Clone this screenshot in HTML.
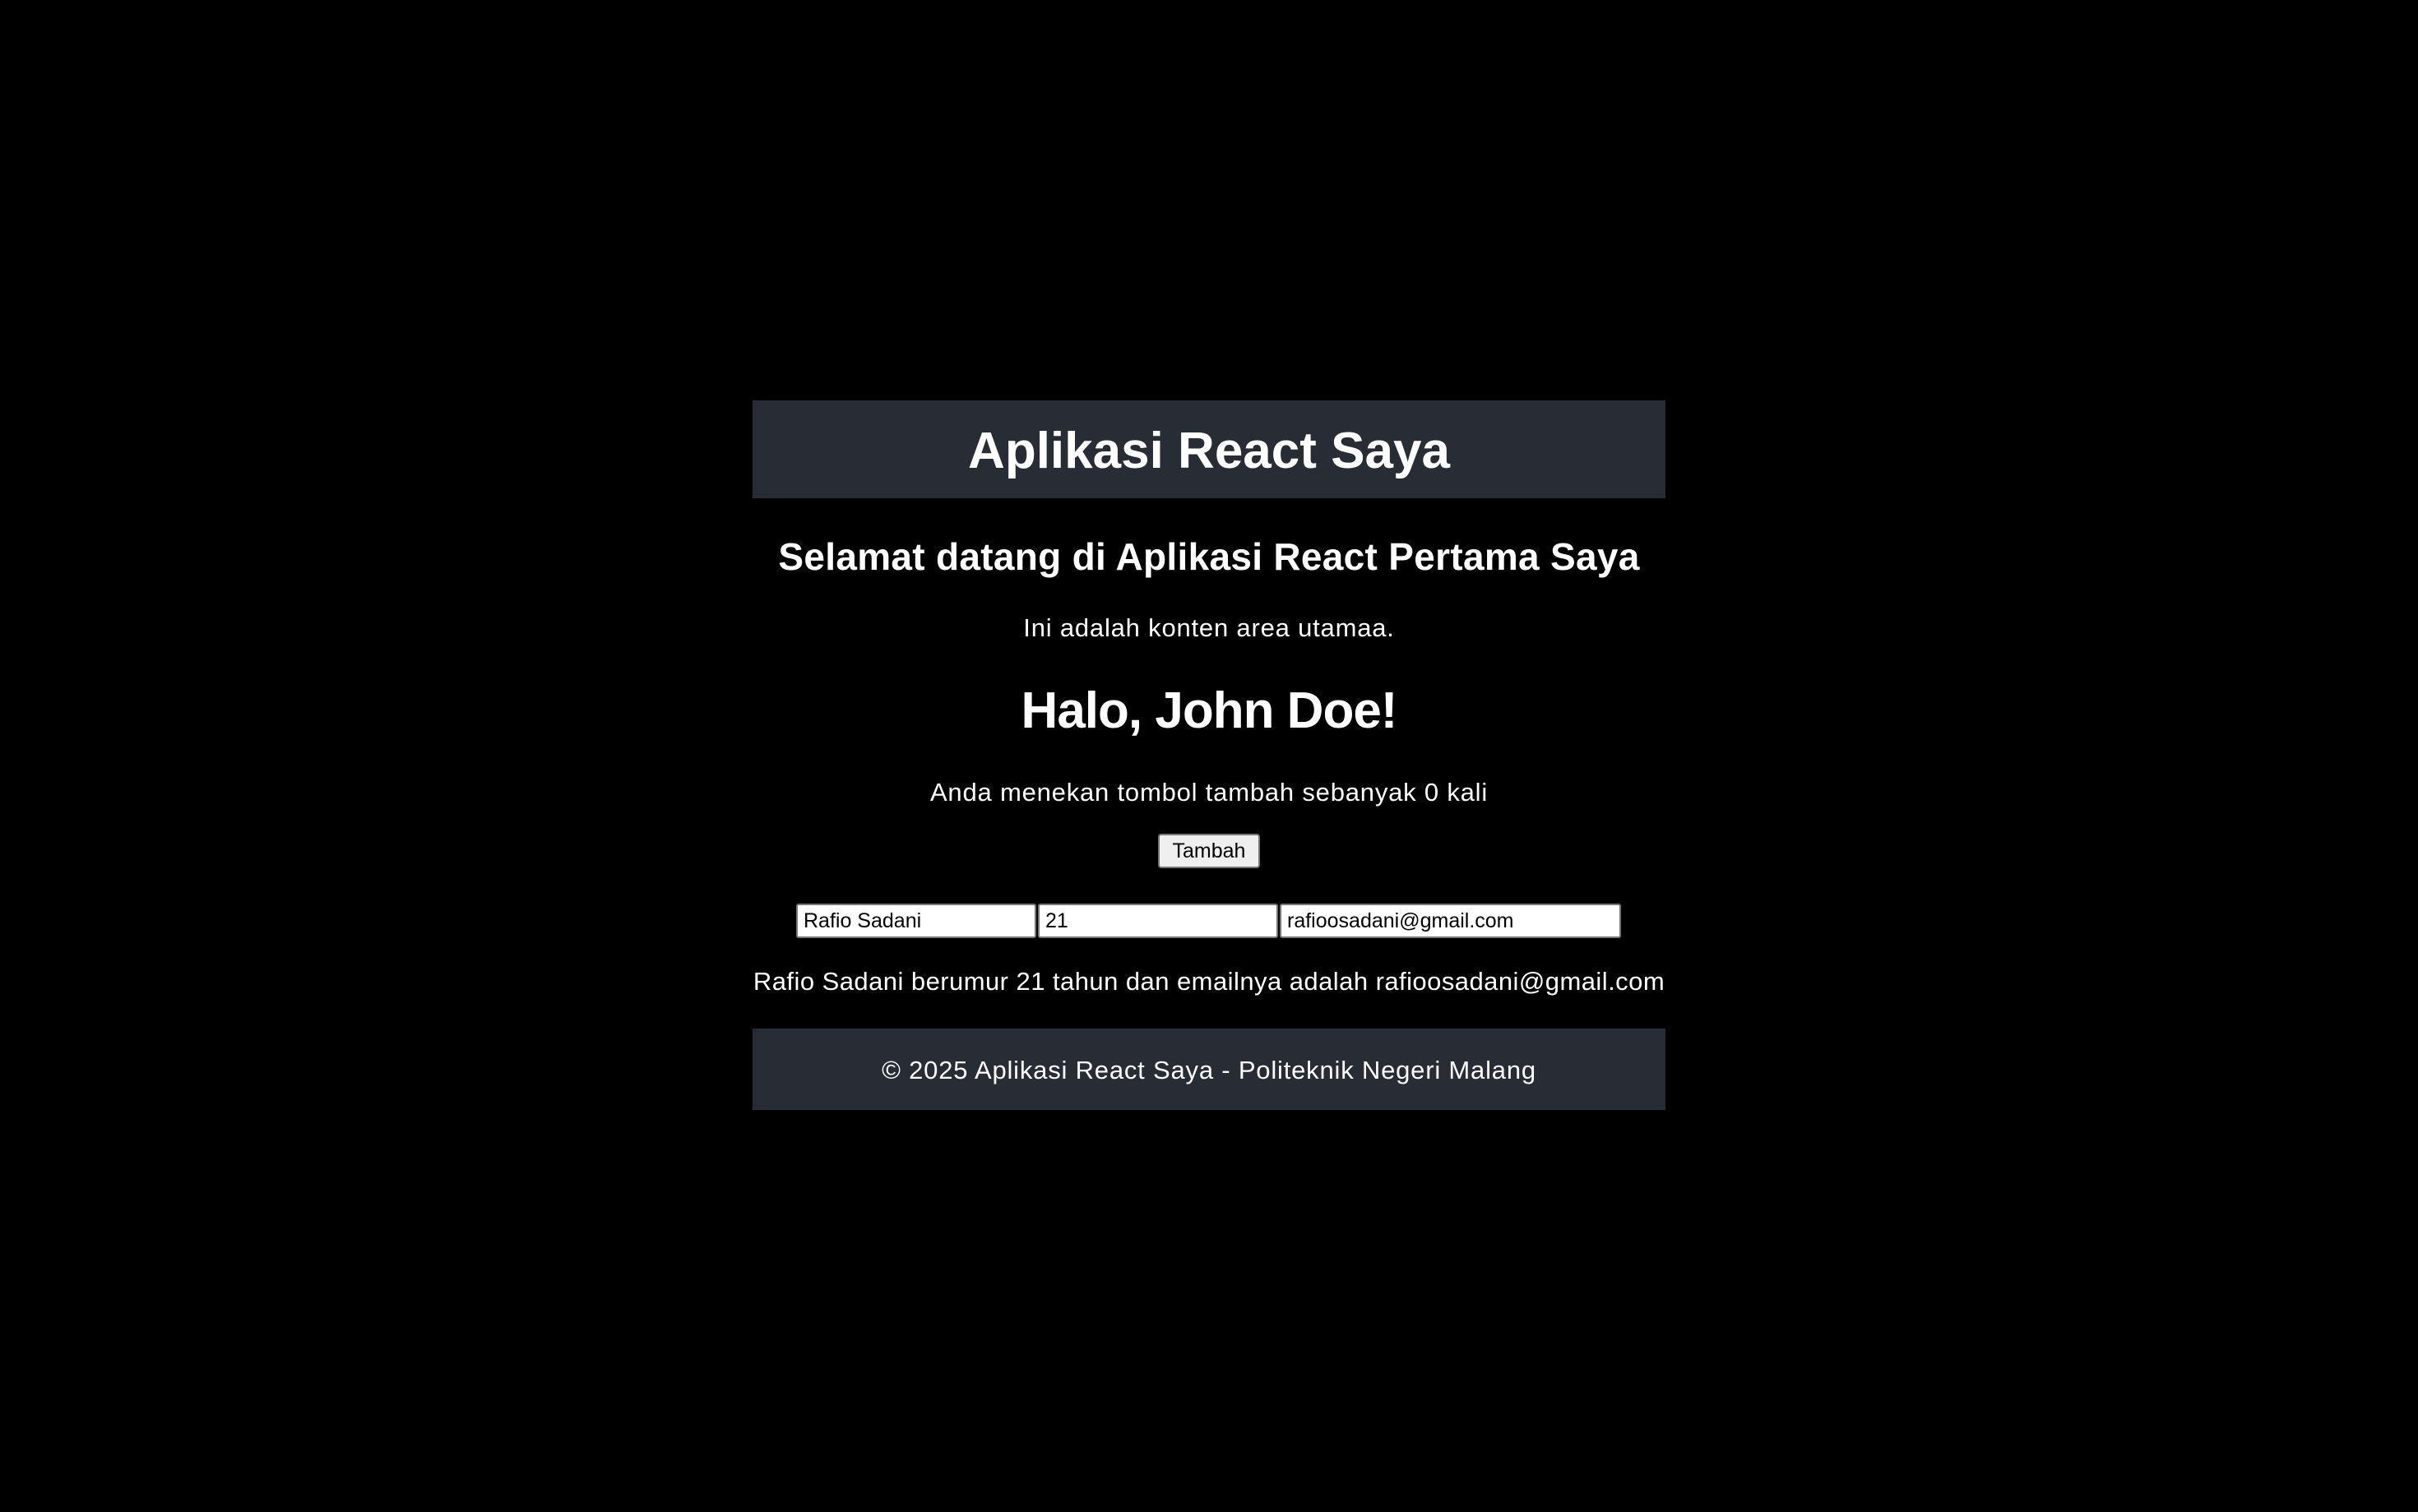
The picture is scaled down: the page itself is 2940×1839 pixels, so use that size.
<!DOCTYPE html>
<html><head><meta charset="utf-8"><style>
html,body{margin:0;padding:0;background:#000;width:2940px;height:1839px;overflow:hidden;font-family:"Liberation Sans",Arial,sans-serif;color:#fff}
.a{position:absolute;left:915px;width:1110px;text-align:center;white-space:nowrap;line-height:1}
.t{font-size:31px;letter-spacing:0.8px}
.hdr{position:absolute;left:915px;top:487px;width:1110px;height:119px;background:#282c34}
.ftr{position:absolute;left:915px;top:1251px;width:1110px;height:99px;background:#282c34}
input,button{position:absolute;font-family:"Liberation Sans",Arial,sans-serif;font-size:25px;box-sizing:border-box;color:#000}
input{background:#fff;border:2px solid #767676;border-radius:3px;padding:0 7px;height:42px;top:1099px}
button{left:1408px;top:1014px;width:124px;height:42px;background:#efefef;border:2px solid #767676;border-radius:4px;padding:0}
</style></head><body>
<div class="hdr"></div>
<div class="a" style="top:518px;font-size:62px;font-weight:bold">Aplikasi React Saya</div>
<div class="a" style="top:654px;font-size:46px;font-weight:bold;letter-spacing:0.3px">Selamat datang di Aplikasi React Pertama Saya</div>
<div class="a t" style="top:748px">Ini adalah konten area utamaa.</div>
<div class="a" style="top:834px;font-size:62px;font-weight:bold;letter-spacing:-1px">Halo, John Doe!</div>
<div class="a t" style="top:948px">Anda menekan tombol tambah sebanyak 0 kali</div>
<button>Tambah</button>
<input style="left:968px;width:292px" value="Rafio Sadani">
<input style="left:1262px;width:292px" value="21">
<input style="left:1556px;width:415px" value="rafioosadani@gmail.com">
<div class="a t" style="top:1178px;letter-spacing:0.45px">Rafio Sadani berumur 21 tahun dan emailnya adalah rafioosadani@gmail.com</div>
<div class="ftr"></div>
<div class="a t" style="top:1286px">© 2025 Aplikasi React Saya - Politeknik Negeri Malang</div>
</body></html>
